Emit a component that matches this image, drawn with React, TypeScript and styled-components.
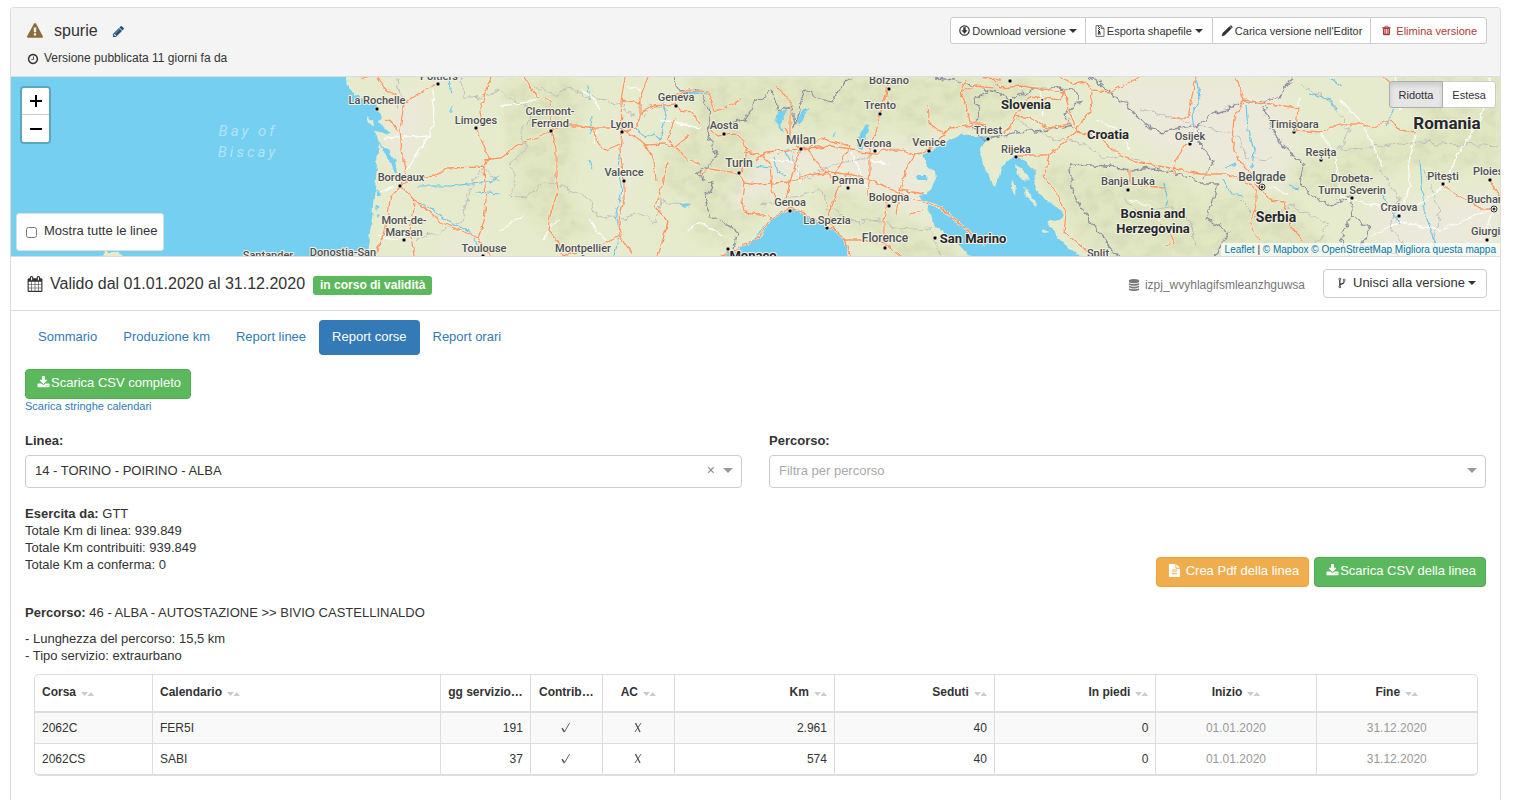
import React from 'react';
import styled, { createGlobalStyle, css } from 'styled-components';

const GlobalStyle = createGlobalStyle`
  * { box-sizing: border-box; }
  body {
    margin: 0;
    background: #fff;
    color: #333;
    font-family: "Liberation Sans", Arial, sans-serif;
    font-size: 12px;
    line-height: 17px;
  }
  button, select, input { font-family: inherit; }
  a { color: #337ab7; text-decoration: none; }
`;

/* ---------- icons ---------- */

const ICONS = {
  warning:
    'M1024 1375v-190q0-14-9.5-23.5t-22.5-9.5h-192q-13 0-22.5 9.5t-9.5 23.5v190q0 14 9.5 23.5t22.5 9.5h192q13 0 22.5-9.5t9.5-23.5zm-2-374l18-459q0-12-10-19-13-11-24-11h-220q-11 0-24 11-10 7-10 21l17 457q0 10 10 16.5t24 6.5h185q14 0 23.5-6.5t10.5-16.5zm-14-934l768 1408q35 63-2 126-17 29-46.5 46t-63.5 17h-1536q-34 0-63.5-17t-46.5-46q-37-63-2-126l768-1408q17-31 47-49t65-18 65 18 47 49z',
  pencil:
    'M491 1536l91-91-235-235-91 91v107h128v128h107zm523-928q0-22-22-22-10 0-17 7l-542 542q-7 7-7 17 0 22 22 22 10 0 17-7l542-542q7-7 7-17zm-54-192l416 416-832 832h-416v-416zm683 96q0 53-37 90l-166 166-416-416 166-165q36-38 90-38 53 0 91 38l235 234q37 39 37 91z',
  clock:
    'M1024 544v448q0 14-9 23t-23 9h-320q-14 0-23-9t-9-23v-64q0-14 9-23t23-9h224v-352q0-14 9-23t23-9h64q14 0 23 9t9 23zm416 352q0-148-73-273t-198-198-273-73-273 73-198 198-73 273 73 273 198 198 273 73 273-73 198-198 73-273zm224 0q0 209-103 385.5t-279.5 279.5-385.5 103-385.5-103-279.5-279.5-103-385.5 103-385.5 279.5-279.5 385.5-103 385.5 103 279.5 279.5 103 385.5z',
  trash:
    'M704 1376v-704q0-14-9-23t-23-9h-64q-14 0-23 9t-9 23v704q0 14 9 23t23 9h64q14 0 23-9t9-23zm256 0v-704q0-14-9-23t-23-9h-64q-14 0-23 9t-9 23v704q0 14 9 23t23 9h64q14 0 23-9t9-23zm256 0v-704q0-14-9-23t-23-9h-64q-14 0-23 9t-9 23v704q0 14 9 23t23 9h64q14 0 23-9t9-23zm-544-992h448l-48-117q-7-9-17-11h-317q-10 2-17 11zm928 32v64q0 14-9 23t-23 9h-96v948q0 83-47 143.5t-113 60.5h-832q-66 0-113-58.5t-47-141.5v-952h-96q-14 0-23-9t-9-23v-64q0-14 9-23t23-9h309l70-167q15-37 54-63t79-26h320q40 0 79 26t54 63l70 167h309q14 0 23 9t9 23z',
  download:
    'M1344 1344q0-26-19-45t-45-19-45 19-19 45 19 45 45 19 45-19 19-45zm256 0q0-26-19-45t-45-19-45 19-19 45 19 45 45 19 45-19 19-45zm128-224v320q0 40-28 68t-68 28h-1472q-40 0-68-28t-28-68v-320q0-40 28-68t68-28h465l135 136q58 56 136 56t136-56l136-136h464q40 0 68 28t28 68zm-325-569q17 41-14 70l-448 448q-18 19-45 19t-45-19l-448-448q-31-29-14-70 17-39 59-39h256v-448q0-26 19-45t45-19h256q26 0 45 19t19 45v448h256q42 0 59 39z',
  calendar:
    'M192 1664h288v-288h-288v288zm352 0h320v-288h-320v288zm-352-352h288v-320h-288v320zm352 0h320v-320h-320v320zm-352-384h288v-288h-288v288zm736 736h320v-288h-320v288zm-384-736h320v-288h-320v288zm768 736h288v-288h-288v288zm-384-352h320v-320h-320v320zm-352-864v-288q0-13-9.5-22.5t-22.5-9.5h-64q-13 0-22.5 9.5t-9.5 22.5v288q0 13 9.5 22.5t22.5 9.5h64q13 0 22.5-9.5t9.5-22.5zm736 864h288v-320h-288v320zm-384-384h320v-288h-320v288zm384 0h288v-288h-288v288zm32-480v-288q0-13-9.5-22.5t-22.5-9.5h-64q-13 0-22.5 9.5t-9.5 22.5v288q0 13 9.5 22.5t22.5 9.5h64q13 0 22.5-9.5t9.5-22.5zm384-64v1280q0 52-38 90t-90 38h-1408q-52 0-90-38t-38-90v-1280q0-52 38-90t90-38h128v-96q0-66 47-113t113-47h64q66 0 113 47t47 113v96h384v-96q0-66 47-113t113-47h64q66 0 113 47t47 113v96h128q52 0 90 38t38 90z',
  database:
    'M896 768q237 0 443-43t325-127v170q0 69-103 128t-280 93.5-385 34.5-385-34.5-280-93.5-103-128v-170q119 84 325 127t443 43zm0 768q237 0 443-43t325-127v170q0 69-103 128t-280 93.5-385 34.5-385-34.5-280-93.5-103-128v-170q119 84 325 127t443 43zm0-384q237 0 443-43t325-127v170q0 69-103 128t-280 93.5-385 34.5-385-34.5-280-93.5-103-128v-170q119 84 325 127t443 43zm0-1152q208 0 385 34.5t280 93.5 103 128v128q0 69-103 128t-280 93.5-385 34.5-385-34.5-280-93.5-103-128v-128q0-69 103-128t280-93.5 385-34.5z',
  fork:
    'M672 1472q0-40-28-68t-68-28-68 28-28 68 28 68 68 28 68-28 28-68zm0-1152q0-40-28-68t-68-28-68 28-28 68 28 68 68 28 68-28 28-68zm640 128q0-40-28-68t-68-28-68 28-28 68 28 68 68 28 68-28 28-68zm96 0q0 52-26 96.5t-70 69.5q-2 287-226 414-67 38-203 81-128 40-169.5 71t-41.5 100v26q44 25 70 69.5t26 96.5q0 80-56 136t-136 56-136-56-56-136q0-52 26-96.5t70-69.5v-820q-44-25-70-69.5t-26-96.5q0-80 56-136t136-56 136 56 56 136q0 52-26 96.5t-70 69.5v497q54-26 154-57 55-17 87.5-29.5t70.5-31 59-39.5 40.5-51 28-69.5 8.5-91.5q-44-25-70-69.5t-26-96.5q0-80 56-136t136-56 136 56 56 136z',
  file:
    'M1596 476q14 14 28 36h-472v-472q22 14 36 28zm-476 164h544v1056q0 40-28 68t-68 28h-1344q-40 0-68-28t-28-68v-1600q0-40 28-68t68-28h800v544q0 40 28 68t68 28zm160 736v-64q0-14-9-23t-23-9h-704q-14 0-23 9t-9 23v64q0 14 9 23t23 9h704q14 0 23-9t9-23zm0-256v-64q0-14-9-23t-23-9h-704q-14 0-23 9t-9 23v64q0 14 9 23t23 9h704q14 0 23-9t9-23zm0-256v-64q0-14-9-23t-23-9h-704q-14 0-23 9t-9 23v64q0 14 9 23t23 9h704q14 0 23-9t9-23z',
};

const Svg = styled.svg`
  display: block;
  flex: none;
  fill: currentColor;
`;

const Icon = ({ name, size }: { name: keyof typeof ICONS; size: number }) => (
  <Svg width={size} height={size} viewBox="0 0 1792 1792" aria-hidden="true">
    <path d={ICONS[name]} />
  </Svg>
);

const CircleDownIcon = () => (
  <Svg width={11} height={11} viewBox="0 0 22 22" aria-hidden="true">
    <circle cx="11" cy="11" r="9.4" fill="none" stroke="currentColor" strokeWidth="2.4" />
    <path d="M8.6 4.5h4.8v6h3.8L11 17.4 4.8 10.5h3.8z" />
  </Svg>
);

const ArchiveIcon = () => (
  <Svg width={10} height={12} viewBox="0 0 20 24" aria-hidden="true">
    <path
      d="M2 1.2h10.5L18 6.8v16H2zM12.3 1.5V7H18"
      fill="none"
      stroke="currentColor"
      strokeWidth="1.4"
    />
    <path d="M6 2h2v2H6zM8 4h2v2H8zM6 6h2v2H6zM8 8h2v2H8zM6 10h2v2H6zM7 12h3l1.4 5.5a3 2.6 0 1 1-6 0z" />
    <ellipse cx="8.4" cy="18" rx="1.6" ry="1.1" fill="#fff" />
  </Svg>
);

const SlimPencilIcon = () => (
  <Svg width={12} height={12} viewBox="0 0 24 24" aria-hidden="true">
    <path d="M1 23l2.2-6.8L17 2.6l4.2 4.2L7.6 20.6zM18.2 1.5c1-1 2-1 3 0l1.3 1.3c1 1 1 2 0 3l-.5.5-4.3-4.3z" />
  </Svg>
);

const MarkSvg = styled.svg`
  display: inline-block;
  vertical-align: -1px;
  fill: none;
  stroke: #555;
`;

const FlagMark = ({ on }: { on: boolean }) => (
  <MarkSvg width="10" height="11" viewBox="0 0 10 11" role="img" aria-label={on ? 'sì' : 'no'}>
    {on ? (
      <>
        <path d="M1 6.200L3.400 10" strokeWidth="1.500" />
        <path d="M3.400 10L8.600 1" strokeWidth="0.900" />
      </>
    ) : (
      <>
        <path d="M2.500 1L7 10" strokeWidth="1.400" />
        <path d="M8 1L2 10" strokeWidth="0.900" />
      </>
    )}
  </MarkSvg>
);

/* ---------- page frame ---------- */

const Panel = styled.main`
  margin: 7px 13px 0 10px;
  min-height: calc(100vh - 7px);
  border: 1px solid #ddd;
  border-bottom: 0;
  border-radius: 4px 4px 0 0;
`;

const Header = styled.header`
  display: flex;
  justify-content: space-between;
  align-items: flex-start;
  padding: 9px 13px 9px 16px;
  background: #f4f4f4;
  border-bottom: 1px solid #ddd;
  border-radius: 4px 4px 0 0;
`;

const TitleRow = styled.div`
  display: flex;
  align-items: center;
  height: 28px;
  color: #8a6d3b;
`;

const Title = styled.h1`
  margin: 0 14px 0 11px;
  color: #333;
  font-size: 16px;
  line-height: 20px;
  font-weight: 400;
`;

const PlainButton = styled.button`
  display: flex;
  padding: 0;
  border: 0;
  background: none;
  color: #23527c;
  cursor: pointer;
`;

const Published = styled.p`
  display: flex;
  align-items: center;
  gap: 5px;
  margin: 5px 0 0;
`;

const ButtonGroup = styled.div`
  display: flex;
`;

const GroupButton = styled.button<{ $danger?: boolean; $active?: boolean; $roomy?: boolean }>`
  display: flex;
  align-items: center;
  gap: 2px;
  height: 27px;
  padding: 0 ${(p) => (p.$roomy ? 9 : 8)}px;
  border: 1px solid #ccc;
  background: #fff;
  color: ${(p) => (p.$danger ? '#a93c39' : '#333')};
  font-size: 11px;
  line-height: 16px;
  white-space: nowrap;
  cursor: pointer;
  & + & { margin-left: -1px; }
  &:first-child { border-radius: 3px 0 0 3px; }
  &:last-child { border-radius: 0 3px 3px 0; }
  ${(p) =>
    p.$danger &&
    css`
      gap: 4px;
      padding: 0 9px 0 10px;
    `}
  ${(p) =>
    p.$active &&
    css`
      background: #e6e6e6;
      border-color: #adadad;
      box-shadow: inset 0 3px 5px rgba(0, 0, 0, 0.125);
      z-index: 1;
    `}
`;

const Caret = styled.span<{ $tone?: string }>`
  flex: none;
  margin-left: 1px;
  border: 4px solid transparent;
  border-top-color: ${(p) => p.$tone || 'currentColor'};
  border-bottom: 0;
`;

/* ---------- map ---------- */

const MapBox = styled.section`
  position: relative;
  height: 179px;
  overflow: hidden;
  background: #75cff0;
`;

const MapDrawing = styled.svg`
  display: block;
  width: 100%;
  height: 100%;
`;

const ZoomControl = styled.div`
  position: absolute;
  top: 9px;
  left: 9px;
  display: flex;
  flex-direction: column;
  border: 2px solid rgba(0, 0, 0, 0.2);
  border-radius: 4px;
  background-clip: padding-box;
`;

const ZoomButton = styled.button`
  display: grid;
  place-items: center;
  width: 27px;
  height: 27px;
  padding: 0;
  border: 0;
  background: #fff;
  cursor: pointer;
  &:first-child {
    border-bottom: 1px solid #ccc;
    border-radius: 2px 2px 0 0;
  }
  &:last-child { border-radius: 0 0 2px 2px; }
`;

const LinesToggle = styled.label`
  position: absolute;
  left: 5px;
  bottom: 5px;
  display: flex;
  align-items: center;
  gap: 7px;
  height: 38px;
  padding: 0 6px 3px 9px;
  border: 1px solid #ddd;
  border-radius: 3px;
  background: #fff;
  font-size: 13px;
  input {
    width: 11px;
    height: 11px;
    margin: 4px 0 0;
  }
`;

const SizeToggle = styled(ButtonGroup)`
  position: absolute;
  top: 4px;
  right: 4px;
`;

const Attribution = styled.div`
  position: absolute;
  right: 0;
  bottom: 0;
  padding: 0 4px;
  background: rgba(255, 255, 255, 0.7);
  font-size: 10px;
  line-height: 13px;
  a { color: #0078a8; }
`;

const SEA = '#75cff0';
const LAND = '#e6ebcd';

const COASTLINE =
  'M345 70L346 80 350 90 356 95 363 99 370 101 376 105 379 111 381 117 379 123 384 128 391 133 386 134 381 132 374 131 377 137 379 144 378 152 377 163 376 178 375 189 373 204 372 219 369 238 366 262 H717 L724 253 733 249 745 245 754 239 758 232 764 226 770 219 776 214 782 211 792 210 800 211 808 216 820 223 833 229 840 234 846 241 848 262 H976 L970 256 960 246 950 237 943 233 936 227 931 218 928 208 927 193 932 187 936 179 935 171 927 167 925 160 922 155 930 151 939 146 948 141 957 137 962 133 969 136 980 136 987 135 989 140 983 144 980 148 981 157 984 167 988 175 992 184 995 187 997 181 1000 176 1003 167 1008 160 1015 156 1023 159 1030 166 1036 174 1034 184 1039 194 1048 202 1058 208 1064 215 1060 220 1050 221 1047 223 1054 231 1060 240 1069 248 1081 256 1084 262 H1510 V70Z';

const MOUNTAINS = [
  'M690 75H915V95L900 118 880 126 860 140 838 122 806 132 770 122 752 152 745 195 770 205 742 232 722 246 690 236 700 200 660 190 668 150 700 120Z',
  'M915 77H1040L1020 118 985 126 950 118 930 124 908 150 898 120Z',
  'M505 80H585L578 130 566 190 590 230 560 245 520 205 512 150Z',
  'M810 185L850 196 905 222 950 248 975 262H900L870 230 830 222Z',
  'M1035 160L1110 170 1180 180 1210 230 1200 262H1100L1065 215Z',
  'M1290 165L1370 145 1500 110V170L1400 165 1330 196 1290 186Z',
  'M1390 77H1500V135L1430 130Z',
  'M1200 195L1290 200 1340 262H1210Z',
];

const PLAINS = [
  'M750 170L790 145 850 150 905 140 950 142 925 158 934 185 926 196 930 225 880 195 820 172 780 180 740 215 724 200Z',
  'M1130 77H1220L1290 90 1290 190 1220 175 1150 150 1110 95Z',
  'M400 90L430 90 420 150 410 165 390 160 385 120Z',
  'M625 90L636 160 622 220 614 200 618 150Z',
  'M1370 206L1500 190V256H1380Z',
  'M440 246L470 235 510 262H440Z',
];

const BORDERS = [
  'M673 77L680 92 700 90 706 104 711 120 708 137 717 154 710 166 697 174 712 184 705 202 710 216 727 224 738 232 733 249',
  'M708 128L726 124 745 120 758 100 772 91 778 110 792 107 794 128 800 106 805 90 832 104 838 90 850 77',
  'M934 78L955 80 985 90 998 92 1008 100 1035 88 1074 90 1080 100 1064 115 1073 128',
  'M987 92L974 98 981 116 972 124 984 140 1000 138 1015 132 1050 130 1072 124',
  'M1090 77L1110 92 1125 104 1140 120 1160 132 1196 126 1214 112 1240 105 1264 102 1280 96 1294 78',
  'M1264 104L1270 124 1284 148 1305 165 1300 186 1330 206 1350 196 1353 216 1340 238 1350 256',
  'M1070 164L1090 165 1108 166 1130 170 1154 168 1180 174 1204 184 1218 184 1206 218 1228 232 1216 256',
  'M1070 166L1072 190 1084 214 1098 232 1118 256',
  'M1196 126L1200 146 1214 162 1204 178',
  'M1354 216L1370 228 1362 246 1400 256',
];

const REGION_BORDERS = [
  'M462 77L464 96 480 98 500 90 512 100 528 108 530 120 520 130 526 150 512 162 515 180 512 196 525 198 545 182',
  'M398 77L400 96 396 110M500 180L480 170 470 190 462 220 440 232 416 240',
  'M545 182L560 186 590 200 595 216 625 218 640 212 655 222 660 200 690 206',
  'M532 84L555 96 570 88 590 98 606 100 622 106 640 122 650 104 668 110',
  'M775 156L790 150 802 180 815 172 840 162 870 158 868 146 905 150',
  'M760 206L800 196 822 190 828 208 856 222 880 220 900 230 930 228 940 256',
  'M1016 118L1034 130 1056 140 1082 142 1100 156 1140 160',
  'M1140 110L1180 120 1216 130 1240 136 1244 158 1270 160',
  'M1300 86L1330 100 1350 130 1340 150 1380 146 1420 142 1500 146',
  'M1240 200L1260 220 1290 206 1330 224 1310 250M1380 170L1400 200 1390 226 1410 256M1424 170L1440 210 1432 256',
  'M1124 198L1140 214 1170 206 1190 220 1196 246',
];

const ROADS = [
  'M500 158L520 144 540 136 551 131 560 126 580 126 596 128 620 128 640 140 646 145 665 144 676 148 688 160 700 165',
  'M524 77L536 96 550 100 552 131 556 148 556 176 558 190 550 216 548 230 558 242 562 256',
  'M625 77L621 100 622 130 620 150 624 180 624 200 619 220 620 236 600 246 562 256M620 236L632 254',
  'M622 132L636 128 642 112 654 106 675 104 680 110 692 112 700 124M592 127L598 142 606 150 620 144M654 160L645 145M654 160L656 180M640 114L640 98 648 77M621 100L640 103',
  'M675 118L668 138 674 148 690 135M676 96L688 90 708 92 714 112 740 100',
  'M667 162L664 180 655 206 668 222 658 256M700 173L710 169 730 172 739 175 744 182 757 184 790 182 810 175 830 172 860 176 880 184 904 196 938 206 955 220 985 245',
  'M744 182L742 200 744 212 760 214 771 218 758 238 738 248 720 256M771 218L790 208 800 211 820 222 834 229 845 240 860 240 885 244 900 256',
  'M710 130L718 136 736 134 744 140 747 156 741 174M745 152L760 155 770 164 772 190 778 206M757 160L766 152 800 149 808 148 814 160 832 178M800 149L790 182 786 200 796 212',
  'M808 148L830 146 845 148 860 152 874 154 885 150 900 150 914 155 925 152 930 148 950 128 985 124',
  'M800 149L790 136 790 100 776 86M790 136L784 128M809 148L820 138 850 146 842 162 832 178',
  'M889 77L886 96 880 112 876 132 870 144 870 170 868 196M888 196L884 220 884 244M915 155L906 170 900 190 896 214M900 190L924 194M910 214L924 210',
  'M848 172L838 190 832 206 828 214 834 228M845 240L850 256',
  'M928 106L930 124 944 134M985 124L970 122 966 104 960 92 975 86 994 88M980 77L1000 80M960 92L966 80',
  'M991 77L1000 88 1020 86 1050 90 1064 92 1060 100 1030 96 1018 112 1010 128 1000 136',
  'M1060 77L1074 84 1086 82 1092 90 1110 92 1140 77M1092 92L1090 112 1078 126 1076 132 1060 146 1048 156 1026 156 1015 156M1064 90L1070 112 1076 130',
  'M1015 116L1030 118 1048 128 1070 124M1050 156L1044 176 1058 196 1066 214 1064 232 1088 252',
  'M1076 132L1100 136 1112 150 1136 162 1170 168 1200 174 1226 174 1250 184 1256 190 1256 206 1250 222 1256 236 1260 240',
  'M1196 77L1192 96 1188 118 1172 118M1186 144L1176 160 1174 174',
  'M1236 77L1244 100 1234 118 1232 140 1238 160 1250 172 1256 184M1244 100L1270 104 1298 108 1296 130 1320 132 1340 124 1360 124 1372 128 1390 120 1400 130 1416 132',
  'M1256 184L1270 200 1284 202 1290 226 1302 240M1130 170L1130 184 1148 186 1164 188M1160 224L1170 232 1174 242 1166 246',
  'M1444 186L1460 196 1480 208 1492 208M1384 77L1394 86M1490 182L1500 196',
  'M491 77L485 92 480 112 482 124M476 128L484 146 488 158 484 168 486 200 484 222 478 238 490 256M500 158L484 160M484 167L446 168 436 176 412 178 401 186',
  'M436 84L412 98 404 104 400 130 402 150 406 168 401 186 390 198 388 216 384 236 374 256M401 186L416 202 430 212 440 222 464 232 478 238M415 204L410 230 414 256',
  'M378 77L386 90 402 98M384 120L392 122 398 132M360 79L370 76',
];

const MINOR_ROADS = [
  'M433 90L434 126 420 150 406 172M384 138L430 136',
  'M500 106L530 102 540 96M580 90L592 96 600 110M626 86L640 90M660 120L700 128M596 130L594 144',
  'M500 232L524 214M590 220L596 230 606 240M544 240L550 226 560 220',
  'M686 230L700 222 722 236M770 160L796 162 800 182M850 150L868 190M870 160L890 164',
  'M1040 90L1044 116M1096 120L1120 130 1130 150M1300 98L1296 120M1340 100L1360 120 1376 150 1382 166M1394 77L1400 110',
  'M1320 132L1336 156 1340 196 1366 204 1396 208 1424 202 1444 186M1416 134L1408 160 1410 186 1398 216M1444 186L1460 150 1480 120 1490 77',
  'M1370 236L1400 222 1440 230 1490 210M1270 186L1290 196M1130 200L1150 206 1160 222M1494 210L1480 240',
  'M380 192L394 186M378 236L394 240 404 236',
];

const RIVERS = [
  'M636 128L644 138 654 134 660 140 666 116 662 100',
  'M620 145L618 170 622 190 616 214 620 232 614 256',
  'M401 186L416 202 428 206 442 218 470 232 478 244M418 186L450 186 490 182 500 176',
  'M448 77L452 94M452 106L452 112M476 192L500 194M588 86L590 100M592 116L590 134M588 160L592 168',
  'M774 156L778 172 786 176M756 166L770 168M785 152L790 162',
  'M1196 80L1200 96 1192 116 1194 126M1222 180L1232 194 1244 196M1246 104L1248 130 1254 150 1252 168M1236 164L1226 168',
  'M1394 108L1386 126M1420 160L1422 186 1424 210 1434 240 1440 256M1380 190L1390 210 1400 224M1164 184L1168 200 1166 206',
  'M1310 94L1330 100 1336 110M1330 78L1342 86M1288 186L1300 188',
];

const LAKES = [
  'M688 93Q697 88 706 90L708 95Q698 92 689 96Z',
  'M778 112L786 108 786 112 780 124 784 132 780 130 776 122Z',
  'M797 121L804 108 808 108 803 120 799 126Z',
  'M865 125L870 126 862 150 856 146 858 136Z',
  'M917 175H926L927 180 918 180ZM920 196L928 194V202L921 201Z',
  'M378 142L390 152 396 162 398 174 395 174 391 162 384 152Z',
  'M376 189L382 195 376 197ZM377 205L380 207 376 210ZM377 214L380 215 377 218Z',
  'M682 204L690 203 684 208ZM832 138L836 130 834 138Z',
];

const ISLANDS = [
  'M367 116L373 121 374 127 369 123Z',
  'M374 131L380 134 384 138 379 137Z',
  'M1015 165L1021 168 1028 176 1030 180 1022 179 1017 172Z',
  'M1012 181L1016 186 1015 196 1011 188Z',
  'M1024 186L1030 196 1038 204 1036 206 1026 196Z',
  'M1052 224L1062 236 1056 236ZM1040 228L1050 232 1044 233Z',
  'M93 259L96 255 102 256 104 252 118 252 126 260Z',
  'M184 259L188 256 192 260ZM330 259L352 255 368 252V262H330Z',
];

type Place = { x: number; y: number; text: string; size?: number; bold?: boolean; anchor?: 'start' | 'end' };

const PLACES: Place[] = [
  { x: 377, y: 104, text: 'La Rochelle' },
  { x: 439, y: 80, text: 'Poitiers' },
  { x: 476, y: 124, text: 'Limoges' },
  { x: 401, y: 181, text: 'Bordeaux' },
  { x: 404, y: 224, text: 'Mont-de-' },
  { x: 404, y: 236, text: 'Marsan' },
  { x: 268, y: 259, text: 'Santander' },
  { x: 343, y: 256, text: 'Donostia-San' },
  { x: 484, y: 252, text: 'Toulouse' },
  { x: 550, y: 115, text: 'Clermont-' },
  { x: 550, y: 127, text: 'Ferrand' },
  { x: 622, y: 128, text: 'Lyon' },
  { x: 676, y: 101, text: 'Geneva' },
  { x: 624, y: 176, text: 'Valence' },
  { x: 583, y: 252, text: 'Montpellier' },
  { x: 724, y: 129, text: 'Aosta' },
  { x: 739, y: 167, text: 'Turin', size: 12 },
  { x: 801, y: 144, text: 'Milan', size: 12 },
  { x: 889, y: 84, text: 'Bolzano' },
  { x: 880, y: 109, text: 'Trento' },
  { x: 874, y: 147, text: 'Verona' },
  { x: 929, y: 146, text: 'Venice' },
  { x: 848, y: 184, text: 'Parma' },
  { x: 889, y: 201, text: 'Bologna' },
  { x: 790, y: 206, text: 'Genoa' },
  { x: 827, y: 224, text: 'La Spezia' },
  { x: 885, y: 242, text: 'Florence', size: 12 },
  { x: 988, y: 134, text: 'Triest' },
  { x: 1016, y: 153, text: 'Rijeka' },
  { x: 753, y: 260, text: 'Monaco', size: 13, bold: true },
  { x: 973, y: 243, text: 'San Marino', size: 13, bold: true },
  { x: 1026, y: 109, text: 'Slovenia', size: 13, bold: true },
  { x: 1108, y: 139, text: 'Croatia', size: 13, bold: true },
  { x: 1190, y: 140, text: 'Osijek' },
  { x: 1128, y: 185, text: 'Banja Luka' },
  { x: 1153, y: 218, text: 'Bosnia and', size: 13, bold: true },
  { x: 1153, y: 233, text: 'Herzegovina', size: 13, bold: true },
  { x: 1098, y: 257, text: 'Split' },
  { x: 1262, y: 181, text: 'Belgrade', size: 12 },
  { x: 1276, y: 222, text: 'Serbia', size: 14, bold: true },
  { x: 1294, y: 128, text: 'Timișoara' },
  { x: 1321, y: 156, text: 'Reșița' },
  { x: 1352, y: 182, text: 'Drobeta-' },
  { x: 1352, y: 194, text: 'Turnu Severin' },
  { x: 1399, y: 211, text: 'Craiova' },
  { x: 1443, y: 180, text: 'Pitești' },
  { x: 1473, y: 175, text: 'Ploiești', anchor: 'start' },
  { x: 1467, y: 203, text: 'Bucharest', anchor: 'start' },
  { x: 1471, y: 235, text: 'Giurgiu', anchor: 'start' },
  { x: 1447, y: 129, text: 'Romania', size: 17, bold: true },
];

const TOWNS = [
  [377, 109], [438, 84], [476, 128], [400, 186], [404, 240], [483, 256], [551, 131], [622, 132],
  [676, 106], [624, 181], [583, 257], [724, 134], [739, 173], [801, 149], [889, 89], [880, 114],
  [875, 151], [929, 151], [848, 188], [889, 206], [790, 211], [827, 228], [885, 248], [728, 249],
  [935, 238], [988, 139], [1016, 157], [1010, 81], [1190, 144], [1128, 190], [1294, 132],
  [1321, 160], [1352, 198], [1399, 216], [1443, 184], [1490, 180], [1487, 240],
];

const CAPITALS = [[1262, 187], [1494, 209]];

type StrokesProps = { paths: string[]; color: string; width: number; opacity?: number };

const Strokes = ({ paths, color, width, opacity }: StrokesProps) => (
  <g fill="none" stroke={color} strokeWidth={width} opacity={opacity} strokeLinejoin="round">
    {paths.map((d) => (
      <path key={d} d={d} />
    ))}
  </g>
);

const EuropeMap = () => (
  <MapDrawing viewBox="11 77 1489 179" preserveAspectRatio="xMidYMid slice" role="img" aria-label="Mappa">
    <defs>
      <filter id="wobble" x="0" y="0" width="1514" height="300" filterUnits="userSpaceOnUse">
        <feTurbulence type="fractalNoise" baseFrequency="0.12" numOctaves="3" seed="4" />
        <feDisplacementMap in="SourceGraphic" scale="9" xChannelSelector="R" yChannelSelector="G" />
      </filter>
      <filter id="wobbleSoft" x="0" y="0" width="1514" height="300" filterUnits="userSpaceOnUse">
        <feTurbulence type="fractalNoise" baseFrequency="0.15" numOctaves="2" seed="9" />
        <feDisplacementMap in="SourceGraphic" scale="5" xChannelSelector="R" yChannelSelector="G" />
      </filter>
      <filter id="feather" x="0" y="0" width="1514" height="300" filterUnits="userSpaceOnUse">
        <feGaussianBlur stdDeviation="8" />
      </filter>
      <filter id="relief" x="0" y="0" width="1514" height="300" filterUnits="userSpaceOnUse">
        <feGaussianBlur in="SourceGraphic" stdDeviation="6" result="area" />
        <feTurbulence type="fractalNoise" baseFrequency="0.07 0.09" numOctaves="4" seed="12" />
        <feColorMatrix values="0 0 0 0 0.6  0 0 0 0 0.62  0 0 0 0 0.45  2.6 0 0 0 -1.1" />
        <feComposite operator="in" in2="area" />
      </filter>
      <clipPath id="land">
        <path d={COASTLINE} />
      </clipPath>
    </defs>
    <rect x="0" y="0" width="1514" height="300" fill={SEA} />
    <path d={COASTLINE} fill={LAND} filter="url(#wobbleSoft)" />
    <g clipPath="url(#land)">
      <g filter="url(#feather)">
        {MOUNTAINS.map((d) => (
          <path key={d} d={d} fill="#e0e6c0" />
        ))}
        {PLAINS.map((d) => (
          <path key={d} d={d} fill="#ebe9d9" />
        ))}
      </g>
      <g filter="url(#relief)" opacity="0.45">
        {MOUNTAINS.map((d) => (
          <path key={d} d={d} />
        ))}
      </g>
    </g>
    <g filter="url(#wobbleSoft)" fill={LAND}>
      {ISLANDS.map((d) => (
        <path key={d} d={d} />
      ))}
    </g>
    <g filter="url(#wobble)">
      <Strokes paths={REGION_BORDERS} color="#bfbfbc" width={1} />
      <Strokes paths={BORDERS} color="#8d90a0" width={1.3} />
    </g>
    <g filter="url(#wobbleSoft)">
      <Strokes paths={RIVERS} color="#66c5ec" width={1.1} />
      <g fill={SEA}>
        {LAKES.map((d) => (
          <path key={d} d={d} />
        ))}
      </g>
      <Strokes paths={MINOR_ROADS} color="#fff" width={1.3} opacity={0.9} />
      <Strokes paths={ROADS} color="#fbeedd" width={2.4} />
      <Strokes paths={ROADS} color="#f6985f" width={1.3} />
    </g>
    {TOWNS.map(([x, y]) => (
      <circle key={`${x}-${y}`} cx={x} cy={y} r="2" fill="#000" stroke="#fff" strokeWidth="0.6" />
    ))}
    {CAPITALS.map(([x, y]) => (
      <g key={`${x}-${y}`}>
        <circle cx={x} cy={y} r="3" fill="#fff" stroke="#333" strokeWidth="1" />
        <circle cx={x} cy={y} r="1.5" fill="#333" />
      </g>
    ))}
    <g fontFamily="Roboto, sans-serif" paintOrder="stroke" stroke="#f3f2e4" strokeWidth="2" strokeLinejoin="round">
      {PLACES.map((p) => (
        <text
          key={p.text}
          x={p.x}
          y={p.y}
          fontSize={p.size || 11}
          fontWeight={p.bold ? 700 : 500}
          fill={p.bold ? '#26282c' : '#4d5054'}
          textAnchor={p.anchor || 'middle'}
        >
          {p.text}
        </text>
      ))}
    </g>
    <g fontFamily="Roboto, sans-serif" fontSize="15" fontStyle="italic" fill="#b3e3f5" textAnchor="middle" letterSpacing="3">
      <text x="248" y="136">Bay of</text>
      <text x="248" y="157">Biscay</text>
    </g>
  </MapDrawing>
);

/* ---------- validity bar ---------- */

const ValidityBar = styled.section`
  display: flex;
  align-items: center;
  justify-content: space-between;
  height: 55px;
  padding: 0 13px 0 16px;
  border-top: 1px solid #ddd;
  border-bottom: 1px solid #ddd;
`;

const Validity = styled.h2`
  display: flex;
  align-items: center;
  margin: 0;
  font-size: 16px;
  line-height: 20px;
  font-weight: 400;
  svg { margin-right: 7px; }
`;

const Badge = styled.span`
  margin: 3px 0 0 8px;
  padding: 0 7px;
  border-radius: 3px;
  background: #5cb85c;
  color: #fff;
  font-size: 12px;
  line-height: 19px;
  font-weight: 700;
`;

const VersionTools = styled.div`
  display: flex;
  align-items: center;
  gap: 18px;
`;

const Schema = styled.span`
  display: flex;
  align-items: center;
  gap: 5px;
  padding-top: 3px;
  color: #777;
`;

const MergeButton = styled.button`
  display: flex;
  align-items: center;
  height: 29px;
  gap: 5px;
  padding: 0 10px 2px 12px;
  border: 1px solid #ccc;
  border-radius: 4px;
  background: #fff;
  color: #333;
  font-size: 13px;
  line-height: 17px;
  cursor: pointer;
  ${Caret} { margin-left: -2px; }
`;

/* ---------- report ---------- */

const Report = styled.section`
  padding: 9px 14px 24px 14px;
  font-size: 13px;
`;

const Tabs = styled.nav`
  display: flex;
`;

const Tab = styled.a<{ $active?: boolean }>`
  padding: 8px 13px 10px;
  border-radius: 4px;
  ${(p) =>
    p.$active &&
    css`
      background: #337ab7;
      color: #fff;
    `}
`;

const ActionButton = styled.button<{ $tone: 'green' | 'orange' }>`
  display: flex;
  align-items: center;
  gap: 1px;
  height: 30px;
  padding: 0 9px 3px 11px;
  border: 1px solid ${(p) => (p.$tone === 'green' ? '#4cae4c' : '#eea236')};
  border-radius: 4px;
  background: ${(p) => (p.$tone === 'green' ? '#5cb85c' : '#f0ad4e')};
  color: #fff;
  font-size: 13px;
  line-height: 17px;
  cursor: pointer;
`;

const Downloads = styled.div`
  display: flex;
  flex-direction: column;
  align-items: flex-start;
  margin-top: 14px;
  a {
    font-size: 11px;
    line-height: 14px;
  }
`;

const Filters = styled.div`
  display: grid;
  grid-template-columns: 1fr 1fr;
  gap: 27px;
  margin-top: 19px;
`;

const FieldLabel = styled.label`
  display: block;
  margin-bottom: 6px;
  font-weight: 700;
`;

const SelectBox = styled.div`
  position: relative;
`;

const Select = styled.select<{ $empty?: boolean }>`
  display: block;
  width: 100%;
  height: 33px;
  padding: 0 40px 3px 9px;
  appearance: none;
  border: 1px solid #ccc;
  border-radius: 4px;
  background: #fff;
  color: ${(p) => (p.$empty ? '#aaa' : '#333')};
  font-size: 13px;
`;

const SelectMarks = styled.div`
  position: absolute;
  top: 0;
  right: 9px;
  display: flex;
  align-items: center;
  gap: 7px;
  height: 30px;
  pointer-events: none;
`;

const ClearButton = styled.button`
  padding: 0;
  border: 0;
  background: none;
  color: #888;
  font-size: 14px;
  line-height: 16px;
  pointer-events: auto;
  cursor: pointer;
`;

const SelectCaret = styled(Caret)`
  border-width: 5px 5px 0;
`;

const Summary = styled.div`
  display: flex;
  align-items: flex-end;
  justify-content: space-between;
  margin-top: 17px;
  p { margin: 0 0 14px; }
`;

const Actions = styled.div`
  display: flex;
  gap: 5px;
`;

const RouteTitle = styled.h3`
  margin: 17px 0 9px;
  font-size: 13px;
  line-height: 17px;
  font-weight: 400;
`;

const RouteFacts = styled.p`
  margin: 0 0 10px;
`;

const TableFrame = styled.div`
  margin: 0 8px 0 9px;
  border: 1px solid #ddd;
  border-bottom-width: 2px;
  border-radius: 5px;
  overflow: hidden;
`;

const TripTable = styled.table`
  width: 100%;
  table-layout: fixed;
  border-collapse: separate;
  border-spacing: 0;
  font-size: 12px;
`;

type Align = 'left' | 'right' | 'center';

const Th = styled.th<{ $align: Align }>`
  height: 38px;
  padding: 0 7px 2px;
  border-bottom: 2px solid #ddd;
  overflow: hidden;
  text-align: ${(p) => p.$align};
  text-overflow: ellipsis;
  white-space: nowrap;
  & + & { border-left: 1px solid #ddd; }
`;

const Td = styled.td<{ $align: Align; $muted?: boolean }>`
  height: 31px;
  padding: 0 7px;
  border-bottom: 1px solid #ddd;
  color: ${(p) => (p.$muted ? '#999' : '#333')};
  text-align: ${(p) => p.$align};
  & + & { border-left: 1px solid #ddd; }
  tr:last-child > & {
    height: 30px;
    border-bottom: 0;
  }
  tr:nth-child(odd) > & { background: #f9f9f9; }
`;

const SortMark = styled.svg`
  display: inline-block;
  margin-left: 5px;
  vertical-align: -1px;
  fill: #ccc;
`;

const SortIcon = () => (
  <SortMark width="13" height="6" viewBox="0 0 13 6" aria-hidden="true">
    <path d="M0 1h7L3.500 5zM6.500 5h6.500L9.800 1z" />
  </SortMark>
);

type Column = { title: string; align: Align; width?: string; sort?: boolean; muted?: boolean };

const COLUMNS: Column[] = [
  { title: 'Corsa', align: 'left', width: '117px', sort: true },
  { title: 'Calendario', align: 'left', sort: true },
  { title: 'gg servizio…', align: 'right', width: '90px' },
  { title: 'Contrib…', align: 'center', width: '72px' },
  { title: 'AC', align: 'center', width: '72px', sort: true },
  { title: 'Km', align: 'right', width: '11.1%', sort: true },
  { title: 'Seduti', align: 'right', width: '11.1%', sort: true },
  { title: 'In piedi', align: 'right', width: '11.2%', sort: true },
  { title: 'Inizio', align: 'center', width: '11.1%', sort: true, muted: true },
  { title: 'Fine', align: 'center', width: '11.2%', sort: true, muted: true },
];

const TRIPS: (string | boolean)[][] = [
  ['2062C', 'FER5I', '191', true, false, '2.961', '40', '0', '01.01.2020', '31.12.2020'],
  ['2062CS', 'SABI', '37', true, false, '574', '40', '0', '01.01.2020', '31.12.2020'],
];

export default function App() {
  return (
    <>
      <GlobalStyle />
      <Panel>
        <Header>
          <div>
            <TitleRow>
              <Icon name="warning" size={16} />
              <Title>spurie</Title>
              <PlainButton aria-label="Modifica nome">
                <Icon name="pencil" size={13} />
              </PlainButton>
            </TitleRow>
            <Published>
              <Icon name="clock" size={12} />
              Versione pubblicata 11 giorni fa da
            </Published>
          </div>
          <ButtonGroup>
            <GroupButton>
              <CircleDownIcon />
              Download versione
              <Caret />
            </GroupButton>
            <GroupButton $roomy>
              <ArchiveIcon />
              Esporta shapefile
              <Caret />
            </GroupButton>
            <GroupButton>
              <SlimPencilIcon />
              Carica versione nell'Editor
            </GroupButton>
            <GroupButton $danger>
              <Icon name="trash" size={11} />
              Elimina versione
            </GroupButton>
          </ButtonGroup>
        </Header>

        <MapBox>
          <EuropeMap />
          <ZoomControl>
            <ZoomButton aria-label="Ingrandisci">
              <Svg width={12} height={12} viewBox="0 0 12 12">
                <path d="M5 0h2v5h5v2H7v5H5V7H0V5h5z" />
              </Svg>
            </ZoomButton>
            <ZoomButton aria-label="Riduci">
              <Svg width={12} height={12} viewBox="0 0 12 12">
                <path d="M0 5h12v2H0z" />
              </Svg>
            </ZoomButton>
          </ZoomControl>
          <LinesToggle>
            <input type="checkbox" />
            Mostra tutte le linee
          </LinesToggle>
          <SizeToggle>
            <GroupButton $active $roomy>Ridotta</GroupButton>
            <GroupButton $roomy>Estesa</GroupButton>
          </SizeToggle>
          <Attribution>
            <a href="#leaflet">Leaflet</a> | <a href="#mapbox">© Mapbox</a>{' '}
            <a href="#osm">© OpenStreetMap</a> <a href="#migliora">Migliora questa mappa</a>
          </Attribution>
        </MapBox>

        <ValidityBar>
          <Validity>
            <Icon name="calendar" size={16} />
            Valido dal 01.01.2020 al 31.12.2020
            <Badge>in corso di validità</Badge>
          </Validity>
          <VersionTools>
            <Schema>
              <Icon name="database" size={12} />
              izpj_wvyhlagifsmleanzhguwsa
            </Schema>
            <MergeButton>
              <Icon name="fork" size={12} />
              Unisci alla versione
              <Caret />
            </MergeButton>
          </VersionTools>
        </ValidityBar>

        <Report>
          <Tabs>
            <Tab href="#sommario">Sommario</Tab>
            <Tab href="#produzione">Produzione km</Tab>
            <Tab href="#linee">Report linee</Tab>
            <Tab href="#corse" $active>Report corse</Tab>
            <Tab href="#orari">Report orari</Tab>
          </Tabs>

          <Downloads>
            <ActionButton $tone="green">
              <Icon name="download" size={13} />
              Scarica CSV completo
            </ActionButton>
            <a href="#calendari">Scarica stringhe calendari</a>
          </Downloads>

          <Filters>
            <div>
              <FieldLabel htmlFor="linea">Linea:</FieldLabel>
              <SelectBox>
                <Select id="linea" defaultValue="14">
                  <option value="14">14 - TORINO - POIRINO - ALBA</option>
                </Select>
                <SelectMarks>
                  <ClearButton aria-label="Rimuovi linea">×</ClearButton>
                  <SelectCaret $tone="#999" />
                </SelectMarks>
              </SelectBox>
            </div>
            <div>
              <FieldLabel htmlFor="percorso">Percorso:</FieldLabel>
              <SelectBox>
                <Select id="percorso" $empty defaultValue="">
                  <option value="">Filtra per percorso</option>
                </Select>
                <SelectMarks>
                  <SelectCaret $tone="#999" />
                </SelectMarks>
              </SelectBox>
            </div>
          </Filters>

          <Summary>
            <p>
              <b>Esercita da:</b> GTT
              <br />
              Totale Km di linea: 939.849
              <br />
              Totale Km contribuiti: 939.849
              <br />
              Totale Km a conferma: 0
            </p>
            <Actions>
              <ActionButton $tone="orange">
                <Icon name="file" size={13} />
                &nbsp;Crea Pdf della linea
              </ActionButton>
              <ActionButton $tone="green">
                <Icon name="download" size={13} />
                Scarica CSV della linea
              </ActionButton>
            </Actions>
          </Summary>

          <RouteTitle>
            <b>Percorso:</b> 46 - ALBA - AUTOSTAZIONE &gt;&gt; BIVIO CASTELLINALDO
          </RouteTitle>
          <RouteFacts>
            - Lunghezza del percorso: 15,5 km
            <br />- Tipo servizio: extraurbano
          </RouteFacts>

          <TableFrame>
            <TripTable>
              <colgroup>
                {COLUMNS.map((c) => (
                  <col key={c.title} width={c.width} />
                ))}
              </colgroup>
              <thead>
                <tr>
                  {COLUMNS.map((c) => (
                    <Th key={c.title} $align={c.align} scope="col">
                      {c.title}
                      {c.sort && <SortIcon />}
                    </Th>
                  ))}
                </tr>
              </thead>
              <tbody>
                {TRIPS.map((trip) => (
                  <tr key={String(trip[0])}>
                    {trip.map((value, i) => (
                      <Td key={COLUMNS[i].title} $align={COLUMNS[i].align} $muted={COLUMNS[i].muted}>
                        {typeof value === 'boolean' ? <FlagMark on={value} /> : value}
                      </Td>
                    ))}
                  </tr>
                ))}
              </tbody>
            </TripTable>
          </TableFrame>
        </Report>
      </Panel>
    </>
  );
}
